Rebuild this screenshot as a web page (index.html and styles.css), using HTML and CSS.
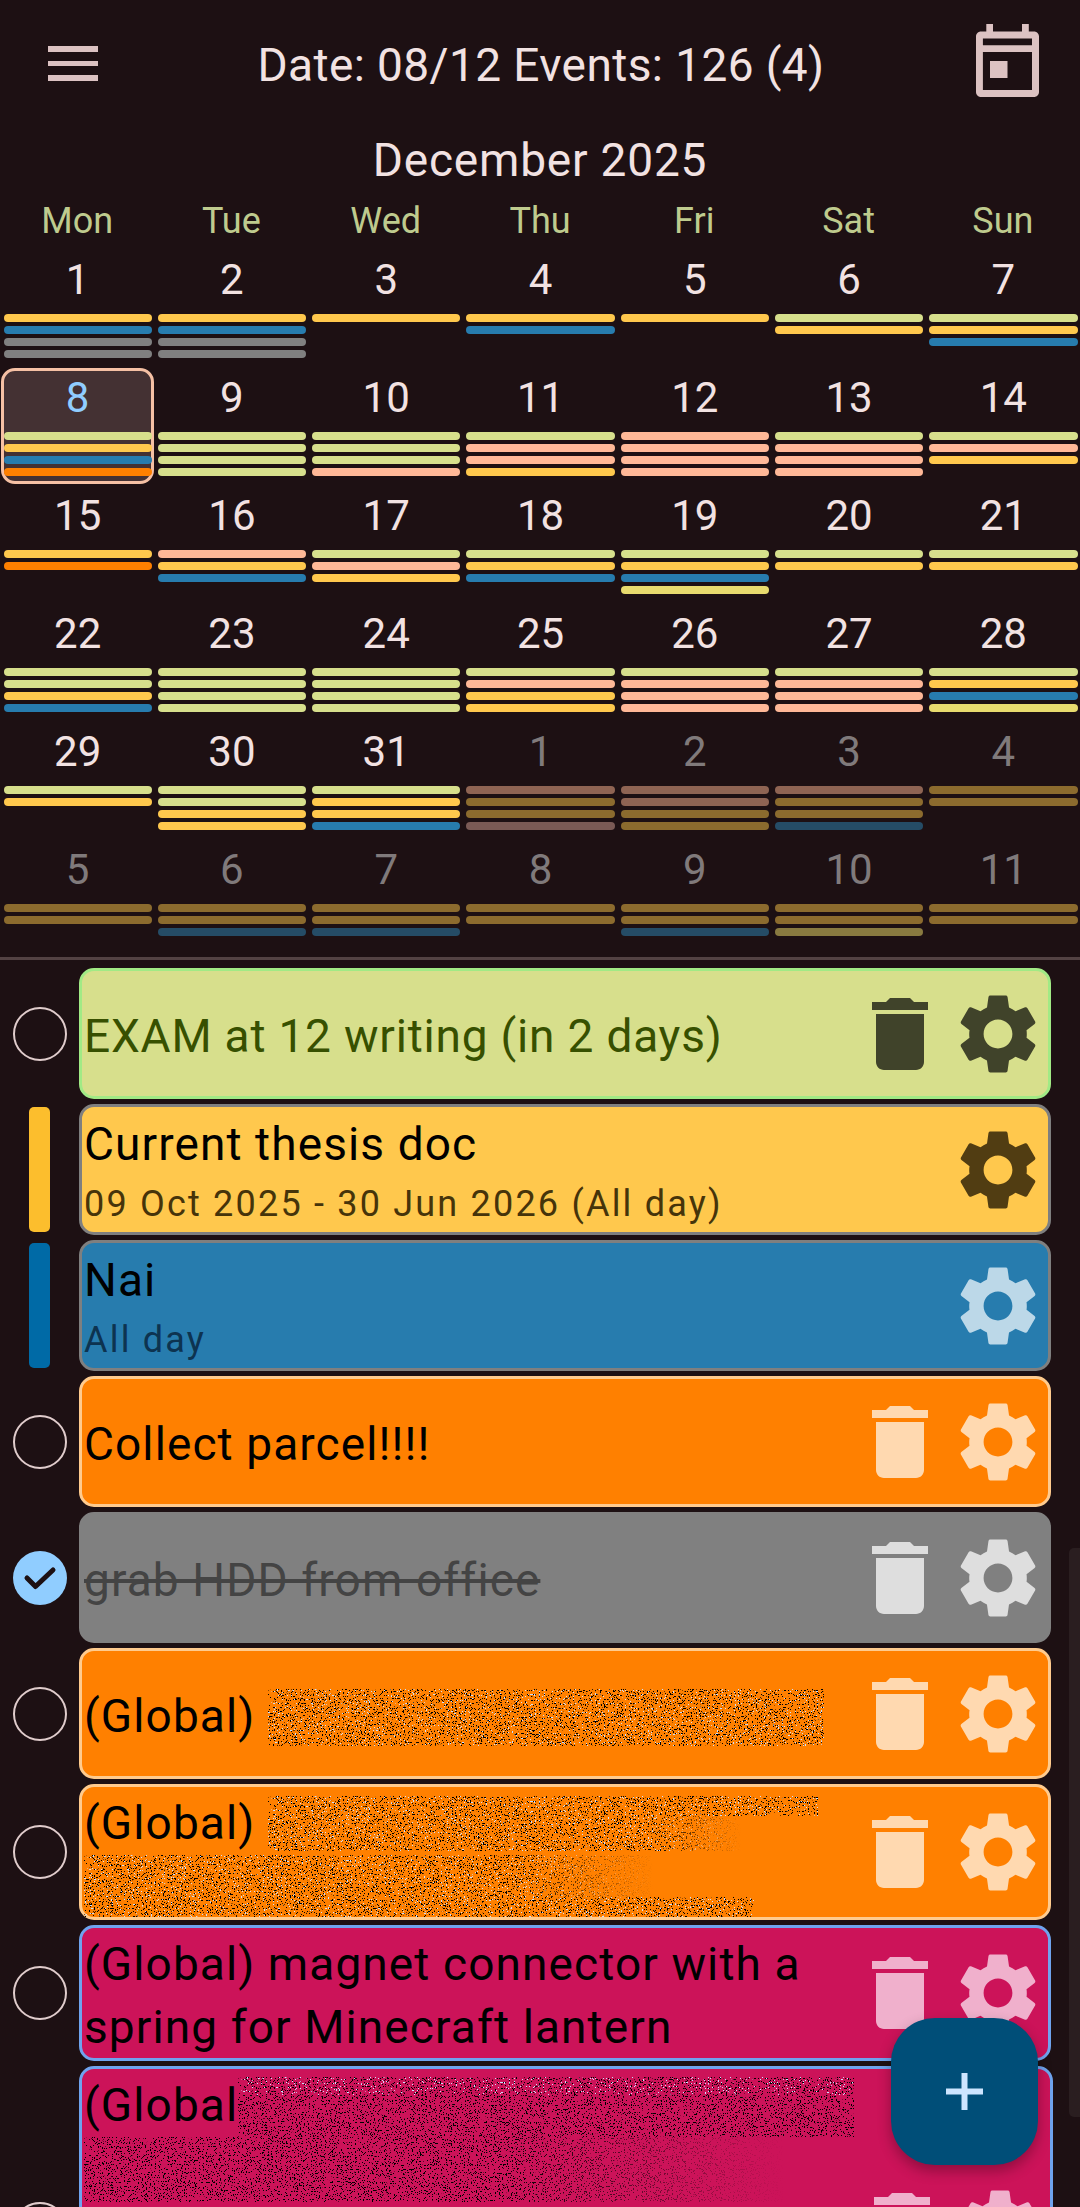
FILE: index.html
```html
<!DOCTYPE html>
<html lang="en">
<head>
    <meta charset="UTF-8">
    <meta name="viewport" content="width=device-width, initial-scale=1.0">
    <title>Calendar</title>
    <link rel="stylesheet" href="styles.css">
</head>
<body>
    <svg class="defs" width="0" height="0">
        <defs>
            <filter id="speck" x="0" y="0" width="100%" height="100%" color-interpolation-filters="sRGB">
                <feTurbulence type="fractalNoise" baseFrequency="0.77" numOctaves="2" seed="7"/>
                <feColorMatrix values="0 0 0 0 0  0 0 0 0 0  0 0 0 0 0  40 0 0 0 -24.6"/>
            </filter>
            <filter id="speck-light" x="0" y="0" width="100%" height="100%" color-interpolation-filters="sRGB">
                <feTurbulence type="fractalNoise" baseFrequency="0.77" numOctaves="2" seed="21"/>
                <feColorMatrix values="0 0 0 0 0.8  0 0 0 0 0.88  0 0 0 0 1  40 0 0 0 -27.4"/>
            </filter>
            <symbol id="gear" viewBox="0 0 24 24">
                <path d="M19.14 12.94c.04-.3.06-.61.06-.94 0-.32-.02-.64-.07-.94l2.03-1.58c.18-.14.23-.41.12-.61l-1.92-3.32c-.12-.22-.37-.29-.59-.22l-2.39.96c-.5-.38-1.03-.7-1.62-.94l-.36-2.54c-.04-.24-.24-.41-.48-.41h-3.84c-.24 0-.43.17-.47.41l-.36 2.54c-.59.24-1.13.57-1.62.94l-2.39-.96c-.22-.08-.47 0-.59.22L2.74 8.87c-.12.21-.08.47.12.61l2.03 1.58c-.05.3-.09.63-.09.94s.02.64.07.94l-2.03 1.58c-.18.14-.23.41-.12.61l1.92 3.32c.12.22.37.29.59.22l2.39-.96c.5.38 1.03.7 1.62.94l.36 2.54c.05.24.24.41.48.41h3.84c.24 0 .44-.17.47-.41l.36-2.54c.59-.24 1.13-.56 1.62-.94l2.39.96c.22.08.47 0 .59-.22l1.92-3.32c.12-.22.07-.47-.12-.61l-2.01-1.58zM12 15.6c-1.98 0-3.6-1.62-3.6-3.6s1.62-3.6 3.6-3.6 3.6 1.62 3.6 3.6-1.62 3.6-3.6 3.6z"/>
            </symbol>
            <symbol id="trash" viewBox="0 0 24 24">
                <path d="M6 19c0 1.1.9 2 2 2h8c1.1 0 2-.9 2-2V7H6v12zM19 4h-3.5l-1-1h-5l-1 1H5v2h14V4z"/>
            </symbol>
        </defs>
    </svg>

    <div class="page">
        <header class="topbar">
            <div class="menu-icon"><span></span><span></span><span></span></div>
            <div class="topbar-title">Date: 08/12 Events: 126 (4)</div>
            <svg class="cal-icon" viewBox="0 0 63 73">
                <path fill-rule="evenodd" d="M10.3 0H17V7.6H46V0H52.8V7.6H58C60.8 7.6 63 9.8 63 12.6V68C63 70.8 60.8 73 58 73H5C2.2 73 0 70.8 0 68V12.6C0 9.8 2.2 7.6 5 7.6H10.3ZM6.9 14.5V21.3H56V14.5ZM6.9 28V66H56V28ZM14 37H31.5V54H14Z"/>
            </svg>
        </header>

        <div class="month">December 2025</div>

        <div class="weekdays">
            <div>Mon</div><div>Tue</div><div>Wed</div><div>Thu</div><div>Fri</div><div>Sat</div><div>Sun</div>
        </div>

        <div class="calendar">
            <div class="day"><div class="num">1</div><div class="bars"><i class="y"></i><i class="b"></i><i class="g"></i><i class="g"></i></div></div>
            <div class="day"><div class="num">2</div><div class="bars"><i class="y"></i><i class="b"></i><i class="g"></i><i class="g"></i></div></div>
            <div class="day"><div class="num">3</div><div class="bars"><i class="y"></i></div></div>
            <div class="day"><div class="num">4</div><div class="bars"><i class="y"></i><i class="b"></i></div></div>
            <div class="day"><div class="num">5</div><div class="bars"><i class="y"></i></div></div>
            <div class="day"><div class="num">6</div><div class="bars"><i class="l"></i><i class="y"></i></div></div>
            <div class="day"><div class="num">7</div><div class="bars"><i class="l"></i><i class="y"></i><i class="b"></i></div></div>

            <div class="day today"><div class="num">8</div><div class="bars"><i class="l"></i><i class="y"></i><i class="b"></i><i class="o"></i></div></div>
            <div class="day"><div class="num">9</div><div class="bars"><i class="l"></i><i class="l"></i><i class="l"></i><i class="l"></i></div></div>
            <div class="day"><div class="num">10</div><div class="bars"><i class="l"></i><i class="l"></i><i class="l"></i><i class="p"></i></div></div>
            <div class="day"><div class="num">11</div><div class="bars"><i class="l"></i><i class="p"></i><i class="p"></i><i class="y"></i></div></div>
            <div class="day"><div class="num">12</div><div class="bars"><i class="p"></i><i class="p"></i><i class="p"></i><i class="p"></i></div></div>
            <div class="day"><div class="num">13</div><div class="bars"><i class="l"></i><i class="p"></i><i class="p"></i><i class="p"></i></div></div>
            <div class="day"><div class="num">14</div><div class="bars"><i class="l"></i><i class="p"></i><i class="y"></i></div></div>

            <div class="day"><div class="num">15</div><div class="bars"><i class="y"></i><i class="o"></i></div></div>
            <div class="day"><div class="num">16</div><div class="bars"><i class="p"></i><i class="y"></i><i class="b"></i></div></div>
            <div class="day"><div class="num">17</div><div class="bars"><i class="l"></i><i class="p"></i><i class="y"></i></div></div>
            <div class="day"><div class="num">18</div><div class="bars"><i class="l"></i><i class="y"></i><i class="b"></i></div></div>
            <div class="day"><div class="num">19</div><div class="bars"><i class="l"></i><i class="y"></i><i class="b"></i><i class="e"></i></div></div>
            <div class="day"><div class="num">20</div><div class="bars"><i class="l"></i><i class="y"></i></div></div>
            <div class="day"><div class="num">21</div><div class="bars"><i class="l"></i><i class="y"></i></div></div>

            <div class="day"><div class="num">22</div><div class="bars"><i class="l"></i><i class="l"></i><i class="y"></i><i class="b"></i></div></div>
            <div class="day"><div class="num">23</div><div class="bars"><i class="l"></i><i class="l"></i><i class="l"></i><i class="l"></i></div></div>
            <div class="day"><div class="num">24</div><div class="bars"><i class="l"></i><i class="l"></i><i class="l"></i><i class="l"></i></div></div>
            <div class="day"><div class="num">25</div><div class="bars"><i class="l"></i><i class="p"></i><i class="y"></i><i class="y"></i></div></div>
            <div class="day"><div class="num">26</div><div class="bars"><i class="l"></i><i class="p"></i><i class="p"></i><i class="p"></i></div></div>
            <div class="day"><div class="num">27</div><div class="bars"><i class="l"></i><i class="p"></i><i class="p"></i><i class="p"></i></div></div>
            <div class="day"><div class="num">28</div><div class="bars"><i class="l"></i><i class="y"></i><i class="b"></i><i class="e"></i></div></div>

            <div class="day"><div class="num">29</div><div class="bars"><i class="l"></i><i class="y"></i></div></div>
            <div class="day"><div class="num">30</div><div class="bars"><i class="l"></i><i class="l"></i><i class="y"></i><i class="y"></i></div></div>
            <div class="day"><div class="num">31</div><div class="bars"><i class="l"></i><i class="y"></i><i class="y"></i><i class="b"></i></div></div>
            <div class="day other"><div class="num">1</div><div class="bars"><i class="dp"></i><i class="dy"></i><i class="dy"></i><i class="dm"></i></div></div>
            <div class="day other"><div class="num">2</div><div class="bars"><i class="dp"></i><i class="dp"></i><i class="dy"></i><i class="dy"></i></div></div>
            <div class="day other"><div class="num">3</div><div class="bars"><i class="dp"></i><i class="dy"></i><i class="dy"></i><i class="db"></i></div></div>
            <div class="day other"><div class="num">4</div><div class="bars"><i class="dy"></i><i class="dy"></i></div></div>

            <div class="day other"><div class="num">5</div><div class="bars"><i class="dy"></i><i class="dy"></i></div></div>
            <div class="day other"><div class="num">6</div><div class="bars"><i class="dy"></i><i class="dy"></i><i class="db"></i></div></div>
            <div class="day other"><div class="num">7</div><div class="bars"><i class="dy"></i><i class="dy"></i><i class="db"></i></div></div>
            <div class="day other"><div class="num">8</div><div class="bars"><i class="dy"></i><i class="dy"></i></div></div>
            <div class="day other"><div class="num">9</div><div class="bars"><i class="dy"></i><i class="dy"></i><i class="db"></i></div></div>
            <div class="day other"><div class="num">10</div><div class="bars"><i class="dy"></i><i class="dy"></i><i class="de"></i></div></div>
            <div class="day other"><div class="num">11</div><div class="bars"><i class="dy"></i><i class="dy"></i></div></div>
        </div>

        <div class="divider"></div>

        <div class="events">
            <div class="event">
                <div class="mark"><span class="radio"></span></div>
                <div class="card lime">
                    <div class="text"><div class="title">EXAM at 12 writing (in 2 days)</div></div>
                    <svg class="icon"><use href="#trash"/></svg>
                    <svg class="icon"><use href="#gear"/></svg>
                </div>
            </div>
            <div class="event">
                <div class="mark"><span class="stripe stripe-yellow"></span></div>
                <div class="card yellow">
                    <div class="text">
                        <div class="title">Current thesis doc</div>
                        <div class="sub">09 Oct 2025 - 30 Jun 2026 (All day)</div>
                    </div>
                    <svg class="icon"><use href="#gear"/></svg>
                </div>
            </div>
            <div class="event">
                <div class="mark"><span class="stripe stripe-blue"></span></div>
                <div class="card blue">
                    <div class="text">
                        <div class="title">Nai</div>
                        <div class="sub">All day</div>
                    </div>
                    <svg class="icon"><use href="#gear"/></svg>
                </div>
            </div>
            <div class="event">
                <div class="mark"><span class="radio"></span></div>
                <div class="card orange">
                    <div class="text"><div class="title">Collect parcel!!!!</div></div>
                    <svg class="icon"><use href="#trash"/></svg>
                    <svg class="icon"><use href="#gear"/></svg>
                </div>
            </div>
            <div class="event">
                <div class="mark">
                    <span class="radio checked">
                        <svg viewBox="0 0 54 54"><path d="M14 27l8.500 8.500L40 19"/></svg>
                    </span>
                </div>
                <div class="card done">
                    <div class="text"><div class="title">grab HDD from office</div></div>
                    <svg class="icon"><use href="#trash"/></svg>
                    <svg class="icon"><use href="#gear"/></svg>
                </div>
            </div>
            <div class="event">
                <div class="mark"><span class="radio"></span></div>
                <div class="card orange">
                    <div class="text">
                        <div class="title">(Global) <svg class="noise n1"><rect width="100%" height="100%" filter="url(#speck)"/><rect width="100%" height="100%" filter="url(#speck-light)"/></svg></div>
                    </div>
                    <svg class="icon"><use href="#trash"/></svg>
                    <svg class="icon"><use href="#gear"/></svg>
                </div>
            </div>
            <div class="event">
                <div class="mark"><span class="radio"></span></div>
                <div class="card orange two-line">
                    <div class="text">
                        <div class="title">(Global) <svg class="noise n2"><rect width="100%" height="100%" filter="url(#speck)"/><rect width="100%" height="100%" filter="url(#speck-light)"/></svg></div>
                        <div class="title"><svg class="noise n3"><rect width="100%" height="100%" filter="url(#speck)"/><rect width="100%" height="100%" filter="url(#speck-light)"/></svg></div>
                    </div>
                    <svg class="icon"><use href="#trash"/></svg>
                    <svg class="icon"><use href="#gear"/></svg>
                </div>
            </div>
            <div class="event">
                <div class="mark"><span class="radio"></span></div>
                <div class="card crimson">
                    <div class="text">
                        <div class="title">(Global) magnet connector with a</div>
                        <div class="title">spring for Minecraft lantern</div>
                    </div>
                    <svg class="icon"><use href="#trash"/></svg>
                    <svg class="icon"><use href="#gear"/></svg>
                </div>
            </div>
            <div class="event">
                <div class="mark"><span class="radio"></span></div>
                <div class="card crimson tall">
                    <div class="text">
                        <div class="title">(Global<svg class="noise n4"><rect width="100%" height="100%" filter="url(#speck)"/><rect width="100%" height="18" filter="url(#speck-light)"/></svg></div>
                        <div class="title"><svg class="noise n5"><rect width="100%" height="100%" filter="url(#speck)"/></svg></div>
                    </div>
                    <svg class="icon"><use href="#trash"/></svg>
                    <svg class="icon"><use href="#gear"/></svg>
                </div>
            </div>
        </div>

        <div class="scrollbar"></div>
        <div class="fab">
            <svg viewBox="0 0 37 37"><path d="M15.5 0h6v15.500H37v6H21.500V37h-6V21.500H0v-6h15.500z"/></svg>
        </div>
    </div>
</body>
</html>
```

FILE: styles.css
```css
html, body {
    margin: 0;
    padding: 0;
    background-color: #1d1013;
}
.defs {
    position: absolute;
}
.page {
    position: relative;
    width: 1080px;
    height: 2207px;
    overflow: hidden;
    font-family: Roboto, "Noto Sans", sans-serif;
    color: #f2e2e2;
}

/* top bar */
.topbar {
    display: flex;
    align-items: center;
    height: 129px;
    padding: 0 41px 0 48px;
    box-sizing: border-box;
}
.menu-icon {
    display: flex;
    flex-direction: column;
    gap: 9px;
    width: 50px;
    margin-top: -2px;
}
.menu-icon span {
    height: 5.5px;
    background-color: #dcc2c2;
}
.topbar-title {
    flex: 1;
    text-align: center;
    font-size: 46px;
    letter-spacing: 0.4px;
    line-height: 60px;
    margin-left: 8px;
}
.cal-icon {
    width: 63px;
    height: 73px;
    fill: #dcc2c2;
    margin-top: -8px;
}

/* calendar */
.month {
    height: 67px;
    line-height: 62px;
    text-align: center;
    font-size: 46px;
    letter-spacing: 0.8px;
}
.weekdays {
    display: grid;
    grid-template-columns: repeat(7, 1fr);
    height: 53px;
    line-height: 50px;
    text-align: center;
    font-size: 36px;
    color: #bfcb8e;
}
.calendar {
    display: grid;
    grid-template-columns: repeat(7, 1fr);
    grid-auto-rows: 118px;
}
.day {
    position: relative;
    padding: 0 2.5px 0 3.5px;
    isolation: isolate;
}
.num {
    height: 65px;
    line-height: 61px;
    text-align: center;
    font-size: 42px;
}
.bars {
    display: flex;
    flex-direction: column;
    gap: 4px;
}
.bars i {
    display: block;
    height: 8px;
    border-radius: 4px;
}
.today::before {
    content: "";
    position: absolute;
    inset: 1px 0 1px 1px;
    z-index: -1;
    background-color: #443133;
    border: 3px solid #f5c0a4;
    border-radius: 14px;
}
.today .num {
    color: #90cdff;
}
.other .num {
    color: #807a7b;
}
.y { background-color: #ffc84d; }
.b { background-color: #277cae; }
.g { background-color: #808080; }
.l { background-color: #d7df8c; }
.p { background-color: #ffb897; }
.o { background-color: #ff8000; }
.e { background-color: #e8db6e; }
.dy { background-color: #8c6b2e; }
.dp { background-color: #8f6453; }
.dm { background-color: #7a5a55; }
.db { background-color: #254c66; }
.de { background-color: #897a40; }

.divider {
    height: 3px;
    background-color: #534243;
}

/* events */
.events {
    display: flex;
    flex-direction: column;
    gap: 5px;
    padding: 8px 29px 0 0;
}
.event {
    display: flex;
}
.mark {
    flex: none;
    width: 79px;
    display: flex;
    align-items: center;
    justify-content: center;
}
.radio {
    box-sizing: border-box;
    width: 54px;
    height: 54px;
    border: 2.5px solid #e0cccc;
    border-radius: 50%;
}
.radio.checked {
    border: none;
    background-color: #90cdff;
}
.radio.checked svg {
    display: block;
    fill: none;
    stroke: #1d1013;
    stroke-width: 5;
    stroke-linecap: round;
    stroke-linejoin: round;
}
.stripe {
    width: 21px;
    height: 125px;
    border-radius: 5px;
}
.stripe-yellow { background-color: #fcbe2d; }
.stripe-blue { background-color: #006aa6; }
.card {
    flex: 1;
    display: flex;
    align-items: center;
    box-sizing: border-box;
    min-height: 131px;
    padding: 2px 2px 2px 2px;
    border: 3px solid;
    border-radius: 15px;
    color: #000;
}
.text {
    flex: 1;
    min-width: 0;
    padding-top: 3px;
    margin-bottom: -3px;
}
.yellow .text,
.blue .text {
    padding-top: 0;
    margin-bottom: 0;
}
.title {
    font-size: 46px;
    letter-spacing: 1.1px;
    line-height: 63px;
    white-space: nowrap;
}
.lime .title {
    letter-spacing: 0.8px;
}
.sub {
    font-size: 36px;
    line-height: 50px;
    letter-spacing: 2.2px;
    margin-top: 3px;
    margin-bottom: -3px;
}
.icon {
    flex: none;
    width: 96px;
    height: 96px;
}
.icon + .icon {
    margin-left: 2px;
}
.lime { background-color: #d7df8c; border-color: #a1ea85; }
.lime .title { color: #375000; }
.lime .icon { fill: #40432a; }
.yellow { background-color: #ffc84d; border-color: #7f7f7f; }
.yellow .sub { color: #46340a; }
.yellow .icon { fill: #513d12; }
.blue { background-color: #277cae; border-color: #7f7f7f; }
.blue .sub { color: #0d3350; }
.blue .icon { fill: #bcd8e8; }
.orange { background-color: #ff8000; border-color: #ffcb8e; }
.orange .icon { fill: #ffd9b0; }
.done { background-color: #808080; border-color: #808080; }
.done .title { color: #444; text-decoration: line-through; }
.done .icon { fill: #dedede; }
.crimson { background-color: #cc1359; border-color: #6fa3ee; }
.crimson .icon { fill: #f0b0cc; }
.two-line {
    min-height: 135px;
}
.tall {
    min-height: 326px;
}
.tall .text {
    align-self: flex-start;
}

/* redacted text */
.noise {
    display: inline-block;
}
.n1 { width: 556px; height: 57px; vertical-align: -14px; }
.n2 {
    width: 550px;
    height: 55px;
    vertical-align: -12px;
    -webkit-mask: linear-gradient(#000, #000) top / 100% 20px no-repeat, linear-gradient(90deg, #000 70%, transparent 86%);
    mask: linear-gradient(#000, #000) top / 100% 20px no-repeat, linear-gradient(90deg, #000 70%, transparent 86%);
}
.n3 {
    width: 670px;
    height: 62px;
    vertical-align: top;
    -webkit-mask: linear-gradient(#000, #000) bottom / 100% 20px no-repeat, linear-gradient(90deg, #000 65%, transparent 85%);
    mask: linear-gradient(#000, #000) bottom / 100% 20px no-repeat, linear-gradient(90deg, #000 65%, transparent 85%);
}
.n4 {
    width: 616px;
    height: 60px;
    vertical-align: -16px;
}
.n5 {
    width: 700px;
    height: 65px;
    vertical-align: top;
    -webkit-mask-image: linear-gradient(90deg, #000 60%, transparent 100%);
    mask-image: linear-gradient(90deg, #000 60%, transparent 100%);
}

/* floating bits */
.scrollbar {
    position: absolute;
    left: 1069px;
    top: 1548px;
    width: 11px;
    height: 569px;
    border-radius: 5px 0 0 5px;
    background-color: #2a1e20;
}
.fab {
    position: absolute;
    left: 891px;
    top: 2018px;
    width: 147px;
    height: 147px;
    border-radius: 44px;
    background-color: #004e78;
    box-shadow: 0 6px 14px rgba(0, 0, 0, 0.3);
    display: flex;
    align-items: center;
    justify-content: center;
}
.fab svg {
    width: 37px;
    height: 37px;
    fill: #cde5ff;
}
```
